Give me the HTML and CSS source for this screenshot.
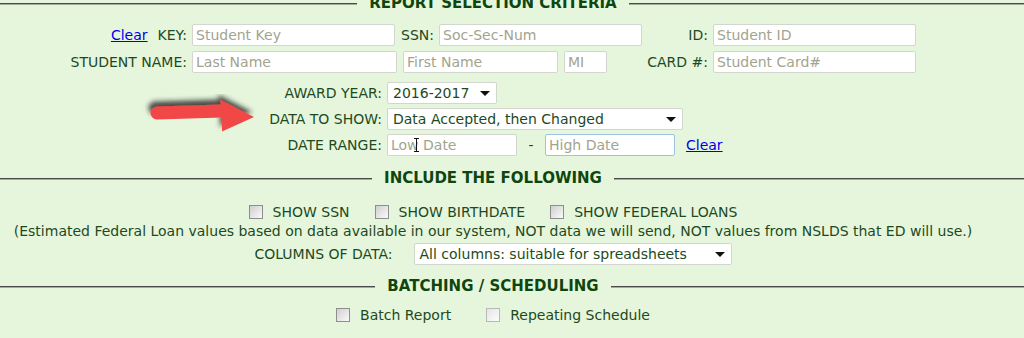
FILE: index.html
```html
<!DOCTYPE html>
<html lang="en">

<head>
    <meta charset="UTF-8" />
    <title>Report Selection</title>
    <link rel="stylesheet" href="styles.css">
</head>

<body>
    <div class="page">
        <div class="section-title first"><span>REPORT SELECTION CRITERIA</span></div>

        <div class="criteria">
            <div class="row">
                <span class="lbl lbl-main"><a href="#" class="link clear-key">Clear</a>KEY:</span>
                <input class="in w203" placeholder="Student Key" />
                <span class="lbl lbl-ssn">SSN:</span>
                <input class="in w203" placeholder="Soc-Sec-Num" />
                <span class="lbl lbl-id">ID:</span>
                <input class="in w203" placeholder="Student ID" />
            </div>
            <div class="row">
                <span class="lbl lbl-main">STUDENT NAME:</span>
                <input class="in w205" placeholder="Last Name" />
                <input class="in w155 next" placeholder="First Name" />
                <input class="in w43 next" placeholder="MI" />
                <span class="lbl lbl-card">CARD #:</span>
                <input class="in w203" placeholder="Student Card#" />
            </div>
        </div>

        <div class="filters">
            <div class="row">
                <span class="lbl lbl-filter">AWARD YEAR:</span>
                <div class="select w110">2016-2017</div>
            </div>
            <div class="row">
                <span class="lbl lbl-filter">DATA TO SHOW:</span>
                <div class="select w296">Data Accepted, then Changed</div>
            </div>
            <div class="row">
                <span class="lbl lbl-filter">DATE RANGE:</span>
                <div class="date-wrap">
                    <input class="in w130" placeholder="Low Date" />
                    <span class="ibeam"></span>
                </div>
                <span class="dash">-</span>
                <input class="in w130 focused" placeholder="High Date" />
                <a href="#" class="link clear-date">Clear</a>
            </div>

            <!-- arrow pasted over the screenshot -->
            <svg class="arrow" width="130" height="50" viewBox="0 0 130 50">
                <defs>
                    <filter id="shade" x="-30%" y="-60%" width="160%" height="200%">
                        <feDropShadow dx="-2" dy="-5" stdDeviation="2.5" flood-color="#222" flood-opacity="0.8" />
                    </filter>
                </defs>
                <path d="M19 12.5 L83 10.5 L82 5.5 L116 23 L84 37.5 L84 23.5 L19 25.5 A6.5 6.5 0 0 1 19 12.5 Z"
                    fill="#f24646" filter="url(#shade)" />
            </svg>
        </div>

        <div class="section-title"><span>INCLUDE THE FOLLOWING</span></div>

        <div class="checks">
            <label class="check"><input type="checkbox" class="box" /> SHOW SSN</label>
            <label class="check"><input type="checkbox" class="box" /> SHOW BIRTHDATE</label>
            <label class="check"><input type="checkbox" class="box" /> SHOW FEDERAL LOANS</label>
        </div>
        <div class="note">(Estimated Federal Loan values based on data available in our system, NOT data we will send,
            NOT values from NSLDS that ED will use.)</div>
        <div class="columns-row">
            <span class="lbl">COLUMNS OF DATA:</span>
            <div class="select w318">All columns: suitable for spreadsheets</div>
        </div>

        <div class="section-title"><span>BATCHING / SCHEDULING</span></div>

        <div class="checks batch">
            <label class="check"><input type="checkbox" class="box" /> Batch Report</label>
            <label class="check"><input type="checkbox" class="box light" /> Repeating Schedule</label>
        </div>
    </div>
</body>

</html>
```

FILE: styles.css
```css
body {
    margin: 0;
    font-family: 'DejaVu Sans', Verdana, sans-serif;
    font-size: 14px;
    color: #1d4a1d;
    background-color: #e6f6dc;
    overflow: hidden;
}

.page {
    width: 986px;
}

/* headings with a rule on both sides */
.section-title {
    display: grid;
    grid-template-columns: 1fr auto 1fr;
    align-items: center;
    height: 18px;
    font-weight: bold;
    font-size: 15px;
    color: #0e460e;
}

.section-title span {
    padding: 0 12px;
}

.section-title::before,
.section-title::after {
    content: "";
    border-top: 1px solid #4a4a4a;
    box-shadow: 0 1px 0 #a5aaa0;
}

.section-title::after {
    margin-right: -38px;
}

.section-title.first {
    margin-top: -6px;
}

.row {
    display: flex;
    align-items: center;
    height: 22px;
}

.lbl {
    box-sizing: border-box;
    text-align: right;
    padding-right: 5px;
    white-space: nowrap;
}

.lbl-main {
    width: 192px;
}

.lbl-ssn {
    width: 44px;
}

.lbl-id {
    width: 71px;
}

.lbl-card {
    width: 106px;
}

.lbl-filter {
    width: 387px;
}

.link {
    color: #0000ee;
    text-decoration: underline;
}

.clear-key {
    margin-right: 10px;
}

.clear-date {
    margin-left: 11px;
}

.criteria {
    margin-top: 12px;
    display: flex;
    flex-direction: column;
    gap: 5px;
}

.in {
    box-sizing: border-box;
    height: 22px;
    border: 1px solid #d2d6cf;
    border-radius: 2px;
    background: #fff;
    padding: 0 3px;
    font-family: inherit;
    font-size: 14px;
    color: #1d4a1d;
    outline: none;
}

.in::placeholder {
    color: #a2a48e;
}

.in.focused {
    border-color: #9cc3e6;
}

.in.next {
    margin-left: 6px;
}

.w43 {
    width: 43px;
}

.w110 {
    width: 110px;
}

.w130 {
    width: 130px;
}

.w155 {
    width: 155px;
}

.w203 {
    width: 203px;
}

.w205 {
    width: 205px;
}

.w296 {
    width: 296px;
}

.w318 {
    width: 318px;
}

.select {
    box-sizing: border-box;
    position: relative;
    height: 22px;
    line-height: 20px;
    border: 1px solid #d2d6cf;
    border-radius: 2px;
    background: #fff;
    padding-left: 5px;
    white-space: nowrap;
}

.select::after {
    content: "";
    position: absolute;
    right: 6px;
    top: 8px;
    border-left: 5px solid transparent;
    border-right: 5px solid transparent;
    border-top: 5px solid #111;
}

.filters {
    position: relative;
    margin-top: 9px;
    display: flex;
    flex-direction: column;
    gap: 4px;
}

.date-wrap {
    position: relative;
    display: flex;
}

.ibeam {
    position: absolute;
    left: 29px;
    top: 4px;
    width: 1px;
    height: 14px;
    background: #111;
}

.ibeam::before,
.ibeam::after {
    content: "";
    position: absolute;
    left: -2px;
    width: 5px;
    height: 1px;
    background: #111;
}

.ibeam::before {
    top: 0;
}

.ibeam::after {
    bottom: 0;
}

.dash {
    width: 28px;
    text-align: center;
}

.arrow {
    position: absolute;
    left: 138px;
    top: 12px;
}

.filters + .section-title {
    margin-top: 13px;
}

.checks {
    display: flex;
    justify-content: center;
    align-items: center;
    gap: 25px;
    margin-top: 16px;
    height: 18px;
}

.check {
    display: flex;
    align-items: center;
    gap: 6px;
}

.box {
    appearance: none;
    -webkit-appearance: none;
    margin: 0 4px 0 0;
    width: 14px;
    height: 14px;
    border: 1px solid #8e8e8e;
    background: linear-gradient(135deg, #cfcfcf, #fafafa);
}

.box.light {
    border-color: #b8b8b8;
    background: linear-gradient(135deg, #e4e4e4, #fdfdfd);
}

.note {
    text-align: center;
    margin-top: 2px;
    line-height: 17px;
}

.columns-row {
    display: flex;
    justify-content: center;
    align-items: center;
    gap: 21px;
    margin-top: 3px;
}

.columns-row .lbl {
    padding-right: 0;
}

.columns-row + .section-title {
    margin-top: 12px;
}

.checks.batch {
    margin-top: 11px;
    gap: 35px;
}
```
